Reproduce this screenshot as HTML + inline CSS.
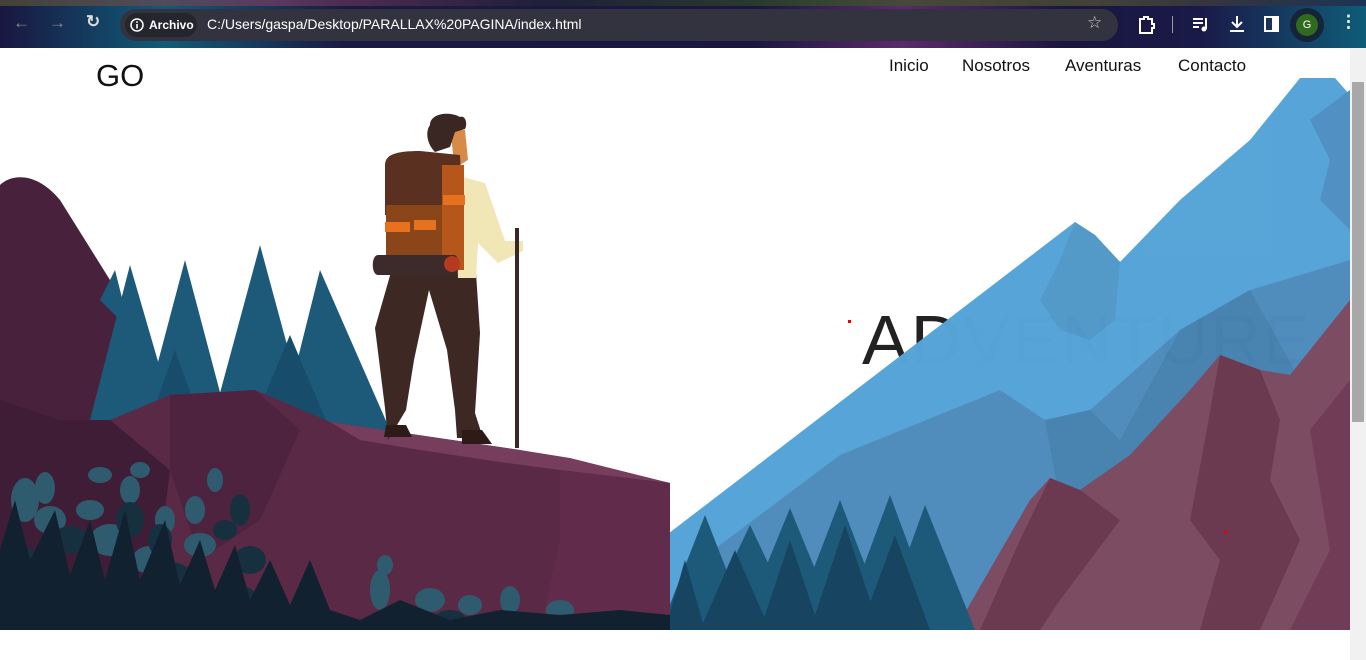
<!DOCTYPE html>
<html><head><meta charset="utf-8"><style>
*{margin:0;padding:0;box-sizing:border-box}
body{width:1366px;height:660px;overflow:hidden;background:#fff;font-family:"Liberation Sans",sans-serif;position:relative}
.chrome{position:absolute;left:0;top:0;width:1366px;height:48px;background:linear-gradient(90deg,#1a1640 0%,#0f5c78 12%,#1a1b45 25%,#1a1640 55%,#5a2a6a 66%,#1a1640 78%,#1a1a48 88%,#0f5c78 100%)}
.chrome .top{position:absolute;left:0;top:0;width:100%;height:6px;background:linear-gradient(90deg,#553 0%,#7a3a60 20%,#223 40%,#352 60%,#553 80%,#224 100%);opacity:.7}
.omni{position:absolute;left:120px;top:9px;width:998px;height:32px;border-radius:16px;background:#33333f}
.chip{position:absolute;left:125px;top:13px;width:72px;height:24px;border-radius:12px;background:#25252e;color:#fff;font-size:12px;font-weight:bold;line-height:24px;padding-left:24px}
.url{position:absolute;left:207px;top:16px;color:#fff;font-size:14px}
.ic{position:absolute;color:#ddd;font-size:17px}
.nav a{position:absolute;top:56px;font-size:17px;color:#111;text-decoration:none}
.sb{position:absolute;left:1350px;top:48px;width:16px;height:612px;background:#f1f1f1}
.th{position:absolute;left:1352px;top:82px;width:12px;height:340px;background:#a8a8a8}
</style></head><body>
<div class="chrome"><div class="top"></div>
<span class="ic" style="left:13px;top:13px;color:#888">←</span>
<span class="ic" style="left:49px;top:13px;color:#888">→</span>
<span class="ic" style="left:86px;top:12px;font-weight:bold">↻</span>
<div class="omni"></div><div class="chip">Archivo</div>
<svg style="position:absolute;left:130px;top:18px" width="14" height="14"><circle cx="7" cy="7" r="6" fill="none" stroke="#fff" stroke-width="1.5"/><rect x="6.2" y="6" width="1.6" height="4.5" fill="#fff"/><rect x="6.2" y="3.3" width="1.6" height="1.6" fill="#fff"/></svg>
<div class="url">C:/Users/gaspa/Desktop/PARALLAX%20PAGINA/index.html</div>
<span class="ic" style="left:1087px;top:13px;color:#ccc">☆</span>
<svg style="position:absolute;left:1137px;top:15px" width="20" height="20"><path d="M3 4h4v-2h4v2h4v5h2v4h-2v5H3z" fill="none" stroke="#fff" stroke-width="2"/></svg>
<div style="position:absolute;left:1172px;top:16px;width:1px;height:17px;background:#999"></div>
<svg style="position:absolute;left:1191px;top:15px" width="20" height="20"><path d="M2 4h10M2 8h10M2 12h6" stroke="#fff" stroke-width="2"/><path d="M15 3v11" stroke="#fff" stroke-width="2"/><circle cx="13" cy="14" r="2.5" fill="#fff"/></svg>
<svg style="position:absolute;left:1227px;top:14px" width="20" height="20"><path d="M10 2v11M5 8l5 5 5-5M3 17h14" fill="none" stroke="#fff" stroke-width="2"/></svg>
<svg style="position:absolute;left:1263px;top:15px" width="18" height="18"><rect x="2" y="2" width="13" height="14" fill="none" stroke="#fff" stroke-width="2"/><rect x="9" y="2" width="6" height="14" fill="#fff"/></svg>
<div style="position:absolute;left:1290px;top:8px;width:34px;height:34px;border-radius:17px;background:#16243a"></div>
<div style="position:absolute;left:1296px;top:14px;width:22px;height:22px;border-radius:11px;background:#2f6a1f;color:#fff;font-size:11px;text-align:center;line-height:22px">G</div>
<span class="ic" style="left:1340px;top:12px;color:#fff;font-weight:bold">⋮</span>
</div>

<div style="position:absolute;left:862px;top:300px;font-size:70px;color:#222;letter-spacing:2px">ADVENTURE</div>
<div style="position:absolute;left:848px;top:320px;width:3px;height:3px;background:#e00"></div>

<svg style="position:absolute;left:0;top:48px" width="1350" height="582" viewBox="0 48 1350 582">
<g opacity="0.99">
<polygon fill="#56a4d8" points="660,540 1075,222 1095,235 1120,262 1180,200 1250,140 1300,78 1335,78 1350,95 1350,630 660,630"/>
<polygon fill="#5199c9" points="1075,222 1095,235 1120,262 1115,320 1090,340 1060,330 1040,300 1060,260"/>
<polygon fill="#4e8cbd" points="700,560 840,455 1000,390 1045,420 1090,410 1180,330 1250,290 1350,260 1350,630 700,630"/>
<polygon fill="#4782b0" points="1045,420 1090,410 1120,440 1180,330 1250,290 1300,380 1350,320 1350,500 1060,500"/>
<polygon fill="#4f8fc2" points="1310,120 1350,90 1350,230 1320,200 1330,160"/>
</g>
<polygon fill="#7c4c62" points="955,630 1030,500 1050,478 1080,490 1130,455 1190,390 1220,355 1260,370 1290,375 1350,300 1350,630"/>
<polygon fill="#6b3950" points="1050,478 1080,490 1120,520 1060,600 1040,630 980,630 1020,540"/>
<polygon fill="#6b3950" points="1220,355 1260,370 1280,420 1270,480 1300,540 1260,630 1200,630 1220,560 1190,520 1205,440"/>
<polygon fill="#713c55" points="1310,430 1350,380 1350,630 1290,630 1330,550"/>
<g fill="#1d5a7a">
<polygon points="660,630 705,515 750,630"/><polygon points="700,630 750,525 800,630"/><polygon points="740,630 790,508 840,630"/><polygon points="790,630 840,500 890,630"/><polygon points="840,630 890,495 940,630"/><polygon points="880,630 925,505 975,630"/>
</g>
<g fill="#174561">
<polygon points="665,630 685,560 705,630"/><polygon points="700,630 735,550 770,630"/><polygon points="760,630 790,540 820,630"/><polygon points="810,630 845,525 880,630"/><polygon points="860,630 895,535 930,630"/>
</g>
<path fill="#48223d" d="M0,185 C10,175 35,170 60,200 L110,280 160,380 180,420 120,630 0,630z"/>
<g fill="#1d5a7a">
<polygon points="90,420 130,265 175,420"/><polygon points="140,430 185,260 230,430"/><polygon points="210,430 260,245 310,430"/><polygon points="280,430 320,270 390,430"/>
<polygon points="100,300 115,270 130,330"/>
</g>
<g fill="#174d6a"><polygon points="250,430 290,335 330,430"/><polygon points="150,420 175,350 200,420"/></g>
<polygon fill="#5a2945" points="110,420 170,395 255,390 330,422 520,450 670,483 670,630 60,630"/>
<polygon fill="#763d5c" points="330,422 520,450 570,458 670,483 560,470 500,462 420,450 360,440"/>
<polygon fill="#4d2340" points="170,395 255,390 300,430 260,520 200,560 170,470"/>
<polygon fill="#612c4b" points="560,470 670,483 670,630 540,630 560,540"/>
<polygon fill="#3f1d36" points="0,400 60,420 110,420 170,470 150,630 0,630"/>
<g fill="#2e5c6e">
<ellipse cx="25" cy="500" rx="14" ry="22"/><ellipse cx="50" cy="520" rx="16" ry="14"/><ellipse cx="45" cy="488" rx="10" ry="16"/><ellipse cx="90" cy="510" rx="14" ry="10"/><ellipse cx="110" cy="540" rx="20" ry="16"/><ellipse cx="150" cy="560" rx="18" ry="14"/><ellipse cx="100" cy="475" rx="12" ry="8"/><ellipse cx="140" cy="470" rx="10" ry="8"/><ellipse cx="200" cy="545" rx="16" ry="12"/><ellipse cx="165" cy="520" rx="10" ry="14"/><ellipse cx="195" cy="510" rx="10" ry="14"/><ellipse cx="215" cy="480" rx="8" ry="12"/><ellipse cx="130" cy="490" rx="10" ry="14"/><ellipse cx="380" cy="590" rx="10" ry="20"/><ellipse cx="430" cy="600" rx="15" ry="12"/><ellipse cx="470" cy="605" rx="12" ry="10"/><ellipse cx="510" cy="600" rx="10" ry="14"/><ellipse cx="560" cy="610" rx="14" ry="10"/><ellipse cx="385" cy="565" rx="8" ry="10"/>
</g>
<g fill="#17303f">
<ellipse cx="70" cy="540" rx="18" ry="14"/><ellipse cx="130" cy="520" rx="14" ry="18"/><ellipse cx="240" cy="510" rx="10" ry="16"/><ellipse cx="250" cy="560" rx="16" ry="14"/><ellipse cx="170" cy="580" rx="24" ry="18"/><ellipse cx="240" cy="600" rx="18" ry="14"/><ellipse cx="20" cy="560" rx="18" ry="14"/><ellipse cx="450" cy="620" rx="16" ry="10"/><ellipse cx="160" cy="540" rx="12" ry="16"/><ellipse cx="225" cy="530" rx="12" ry="10"/>
</g>
<polygon fill="#12212f" points="0,550 15,500 30,560 55,510 70,575 90,520 105,580 125,510 140,580 165,520 180,585 200,540 215,590 235,545 250,600 270,560 290,605 310,560 330,610 360,620 400,600 450,620 500,610 560,615 620,610 670,615 670,630 0,630"/>
<path fill="#3e2823" d="M388,440l-3,-32 -10,-80 20,-70 45,-5 35,5 5,75 -5,80 8,25 -26,0 -2,-28 -8,-60 -18,-60 -15,70 -8,50 z"/>
<path fill="#2e1a16" d="M386,425h20l6,12h-28zM462,430h20l10,14h-30z"/>
<path fill="#f1e6b6" d="M455,175l30,8 20,58 18,0 0,10 -25,12 -20,-20 -2,35 -18,0z"/>
<path fill="#d88a48" d="M450,130l15,0 3,30 -13,8z"/>
<path fill="#3a2622" d="M430,125c0,-12 20,-14 30,-8 5,-2 8,6 5,12l-10,3 -5,15 -15,5c-8,-8 -10,-20 -5,-27z"/>
<rect x="515" y="228" width="4" height="220" fill="#3a2622"/>
<path fill="#5a3120" d="M385,165c0,-10 10,-14 35,-14l40,4 3,60 -78,0z"/>
<path fill="#8a4518" d="M386,205h66v68h-66z"/>
<path fill="#b5561b" d="M442,165h22v105h-22z"/>
<path fill="#e6711f" d="M385,222h25v10h-25zM414,220h22v10h-22zM443,195h22v10h-22z"/>
<path fill="#3d2a2a" d="M378,255h76c6,0 6,20 0,20h-76c-7,0 -7,-20 0,-20z"/>
<circle cx="452" cy="264" r="8" fill="#b53a20"/>
</svg>

<div style="position:absolute;left:96px;top:58px;font-size:31px;color:#111">GO</div>
<div class="nav"><a style="left:889px">Inicio</a><a style="left:962px">Nosotros</a><a style="left:1065px">Aventuras</a><a style="left:1178px">Contacto</a></div>
<div style="position:absolute;left:1224px;top:531px;width:3px;height:3px;background:#e00"></div>
<div class="sb"></div><div class="th"></div>
</body></html>
